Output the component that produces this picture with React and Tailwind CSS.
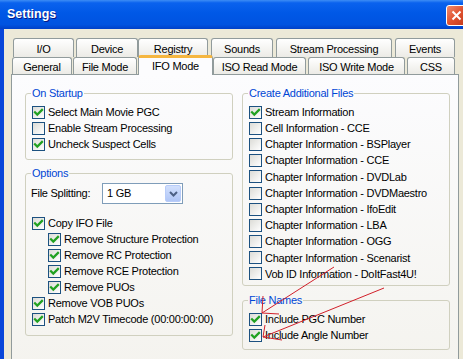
import React from "react";

const font = { fontFamily: '"Liberation Sans", Arial, sans-serif' };

function Check({ on }) {
  return (
    <span className="w-[13px] h-[13px] shrink-0 border border-[#1C5180] bg-gradient-to-br from-[#DCDCD7] to-white flex items-center justify-center">
      {on && (
        <svg width="11" height="11" viewBox="0 0 11 11">
          <path d="M2 5.2 L4.3 7.6 L9 2.9" fill="none" stroke="#21A121" strokeWidth="2.2" strokeLinecap="square" />
        </svg>
      )}
    </span>
  );
}

function Row({ label, on, indent, h = "h-[16px]" }) {
  return (
    <div className={`flex items-center gap-[3px] ${h} ${indent ? "ml-[16px]" : ""}`}>
      <Check on={on} />
      <span className="whitespace-nowrap">{label}</span>
    </div>
  );
}

function Group({ title, className = "", children }) {
  return (
    <fieldset className={`border border-[#D0D0BF] rounded-[3px] pl-[6px] pr-[6px] ${className}`}>
      <legend className="px-[1px] -ml-[1px] text-[#0046D5] leading-[13px]">{title}</legend>
      {children}
    </fieldset>
  );
}

function Tab({ label, w, ml = "", h = "h-[19px]" }) {
  return (
    <div
      className={`${w} ${ml} ${h} pt-[2px] flex items-center justify-center border border-b-0 border-[#919B9C] rounded-t-[3px] bg-gradient-to-b from-white to-[#ECEBE6] whitespace-nowrap`}
    >
      {label}
    </div>
  );
}

export default function App() {
  return (
    <div style={font} className="relative w-[463px] h-[359px] overflow-hidden bg-[#ECE9D8] text-[11px] tracking-[-0.25px] text-black flex flex-col">
      {/* title bar */}
      <div className="h-[29px] shrink-0 flex items-center pl-[7px] bg-[linear-gradient(to_bottom,#3D8DF5_0%,#0A62EE_10%,#0058E6_45%,#0053E0_85%,#0040C8_100%)]">
        <span className="text-white font-bold text-[12.5px] tracking-normal [text-shadow:1px_1px_0_#0A1883] -mt-[1px]">Settings</span>
        <div className="ml-auto -mr-[4px] mt-[1px] w-[21px] h-[21px] rounded-[3px] border border-white bg-gradient-to-br from-[#F08A6C] via-[#E0522F] to-[#C1391B] flex items-center justify-center">
          <svg width="11" height="11" viewBox="0 0 11 11">
            <path d="M1.5 1.5 L9.5 9.5 M9.5 1.5 L1.5 9.5" stroke="white" strokeWidth="2" />
          </svg>
        </div>
      </div>

      <div className="flex flex-1">
        <div className="w-[4px] bg-[#0846D9]" />
        <div className="pl-[7px] pt-[9px]">
          {/* back tab row */}
          <div className="flex h-[19px] pl-[2px]">
            <Tab label="I/O" w="w-[61px]" />
            <Tab label="Device" w="w-[62px]" ml="ml-[2px]" />
            <Tab label="Registry" w="w-[70px]" />
            <Tab label="Sounds" w="w-[62px]" ml="ml-[3px]" />
            <Tab label="Stream Processing" w="w-[116px]" ml="ml-[3px]" />
            <Tab label="Events" w="w-[60px]" ml="ml-[3px]" />
          </div>
          {/* front tab row */}
          <div className="flex h-[17px] items-end pl-[1px] relative z-10">
            <Tab label="General" w="w-[60px]" h="h-[17px]" />
            <Tab label="File Mode" w="w-[64px]" ml="ml-[1px]" h="h-[17px]" />
            <div className="ml-[1px] w-[75px] h-[20px] -mb-[1px] flex items-center justify-center border border-b-0 border-[#919B9C] border-t-[3px] border-t-[#F5B640] rounded-t-[3px] bg-[#FCFCFE]">
              IFO Mode
            </div>
            <Tab label="ISO Read Mode" w="w-[93px]" h="h-[17px]" />
            <Tab label="ISO Write Mode" w="w-[97px]" ml="ml-[2px]" h="h-[17px]" />
            <Tab label="CSS" w="w-[48px]" ml="ml-[2px]" h="h-[17px]" />
          </div>

          {/* panel */}
          <div className="w-[448px] h-[300px] border border-[#919B9C] bg-gradient-to-b from-[#FCFCFE] to-[#F4F3EE] pt-[12px] pl-[13px] flex gap-[9px]">
            <div className="w-[208px] flex flex-col">
              <Group title="On Startup" className="pt-[4px] pb-[7px]">
                <Row label="Select Main Movie PGC" on />
                <Row label="Enable Stream Processing" />
                <Row label="Uncheck Suspect Cells" on />
              </Group>
              <Group title="Options" className="mt-[7px] pt-[3px] pb-[8px]">
                <div className="flex items-center h-[21px]">
                  <span className="w-[70px] -ml-[1px]">File Splitting:</span>
                  <div className="ml-[1px] flex items-center w-[81px] h-[21px] border border-[#7F9DB9] bg-white">
                    <span className="flex-1 pl-[4px]">1 GB</span>
                    <div className="w-[16px] h-[17px] mr-[1px] rounded-[2px] border border-[#B8CCF9] bg-gradient-to-b from-[#D2E0FD] to-[#B0C6F6] flex items-center justify-center">
                      <svg width="9" height="6" viewBox="0 0 9 6">
                        <path d="M1 1 L4.5 4.5 L8 1" fill="none" stroke="#4D6185" strokeWidth="2" />
                      </svg>
                    </div>
                  </div>
                </div>
                <div className="mt-[11px]">
                  <Row label="Copy IFO File" on />
                  <Row label="Remove Structure Protection" on indent />
                  <Row label="Remove RC Protection" on indent />
                  <Row label="Remove RCE Protection" on indent />
                  <Row label="Remove PUOs" on indent />
                  <Row label="Remove VOB PUOs" on />
                  <Row label="Patch M2V Timecode (00:00:00:00)" on />
                </div>
              </Group>
            </div>

            <div className="w-[208px] flex flex-col">
              <Group title="Create Additional Files" className="pt-[4px] pb-[3px]">
                {[
                  ["Stream Information", true],
                  ["Cell Information - CCE"],
                  ["Chapter Information - BSPlayer"],
                  ["Chapter Information - CCE"],
                  ["Chapter Information - DVDLab"],
                  ["Chapter Information - DVDMaestro"],
                  ["Chapter Information - IfoEdit"],
                  ["Chapter Information - LBA"],
                  ["Chapter Information - OGG"],
                  ["Chapter Information - Scenarist"],
                  ["Vob ID Information - DoItFast4U!"],
                ].map(([t, on]) => (
                  <Row key={t} label={t} on={on} h="h-[16.2px]" />
                ))}
              </Group>
              <Group title="File Names" className="mt-[8px] pt-[4px] pb-[6px]">
                <Row label="Include PGC Number" on />
                <Row label="Include Angle Number" on />
              </Group>
            </div>
          </div>
        </div>
      </div>

      {/* hand-drawn red annotation */}
      <svg className="absolute inset-0 pointer-events-none" width="463" height="359">
        <g stroke="#D2202A" strokeWidth="1" fill="none">
          <path d="M334 267 L262 313 L279 314" />
          <path d="M263 296 L262 313" />
          <path d="M384 288 L263 337 L282 340" />
          <path d="M265 325 L263 337" />
        </g>
      </svg>
    </div>
  );
}
